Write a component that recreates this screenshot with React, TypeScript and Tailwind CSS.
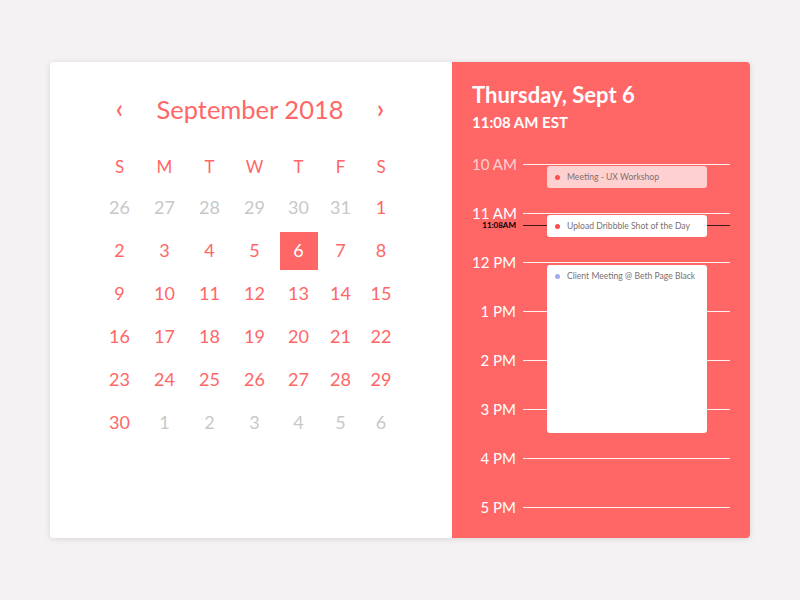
import React from 'react';

const WEEKDAYS = ['S', 'M', 'T', 'W', 'T', 'F', 'S'];

// 6 weeks, grey = outside of September
const DAYS: { d: number; muted?: boolean }[] = [
  ...[26, 27, 28, 29, 30, 31].map(d => ({ d, muted: true })),
  ...Array.from({ length: 30 }, (_, i) => ({ d: i + 1 })),
  ...[1, 2, 3, 4, 5, 6].map(d => ({ d, muted: true })),
];

const HOURS = ['10 AM', '11 AM', '12 PM', '1 PM', '2 PM', '3 PM', '4 PM', '5 PM'];

const EVENTS = [
  { title: 'Meeting - UX Workshop', top: 26, height: 22, bg: 'bg-[#ffd0d0]', dot: 'bg-[#ff4d4d]' },
  { title: 'Upload Dribbble Shot of the Day', top: 75, height: 22, bg: 'bg-white', dot: 'bg-[#ff4d4d]' },
  { title: 'Client Meeting @ Beth Page Black', top: 125, height: 168, bg: 'bg-white', dot: 'bg-[#a4a8f4]' },
];

export default function App() {
  return (
    <div className="w-[800px] h-[600px] bg-[#f4f2f3] pt-[62px] pl-[50px] font-['Lato','Open_Sans',sans-serif]">
      <div className="flex w-[700px] h-[476px] rounded-[4px] overflow-hidden shadow-[0_1px_6px_rgba(0,0,0,0.12)]">
        {/* Calendar */}
        <div className="w-[402px] bg-white pl-[47px] pt-[34px]">
          <div className="flex items-center h-[28px] text-[#ff6666]">
            <div className="w-[45px] text-center text-[26px] leading-none font-semibold -mt-[4px]">‹</div>
            <div className="w-[216px] text-center text-[25.5px] leading-none whitespace-nowrap">September 2018</div>
            <div className="w-[45px] text-center text-[26px] leading-none font-semibold -mt-[4px]">›</div>
          </div>
          <div className="grid grid-cols-[45px_45px_45px_45px_43px_41px_40px] mt-[23px]">
            {WEEKDAYS.map((w, i) => (
              <div key={i} className="h-[39px] flex items-center justify-center text-[17px] text-[#ff6666]">{w}</div>
            ))}
            {DAYS.map((day, i) => {
              const selected = !day.muted && day.d === 6;
              return (
                <div key={i} className="h-[43px] flex items-center justify-center">
                  <div
                    className={`w-[38px] h-[38px] flex items-center justify-center text-[18px] ${
                      selected ? 'bg-[#ff6666] text-white' : day.muted ? 'text-[#c8c8c8]' : 'text-[#ff6666]'
                    }`}
                  >
                    {day.d}
                  </div>
                </div>
              );
            })}
          </div>
        </div>

        {/* Day view */}
        <div className="flex-1 bg-[#ff6666] pl-[20px] pr-[20px] pt-[19px] text-white">
          <div className="text-[22px] font-bold leading-[28px] whitespace-nowrap">Thursday, Sept 6</div>
          <div className="text-[15px] font-bold leading-[20px] mt-[3px]">11:08 AM EST</div>

          <div className="relative mt-[8px]">
            {HOURS.map((h, i) => (
              <div key={h} className="h-[49px] flex items-center">
                <div className={`w-[44px] text-right text-[15px] leading-none whitespace-nowrap ${i === 0 ? 'text-white/70' : 'text-white'}`}>{h}</div>
                <div className="flex-1 ml-[7px] h-px bg-white/90" />
              </div>
            ))}

            {/* now marker */}
            <div className="absolute left-0 top-[81px] w-full flex items-center">
              <div className="w-[44px] text-right text-[8px] font-bold text-black leading-none">11:08AM</div>
              <div className="flex-1 ml-[7px] h-px bg-[#3a1a1a]" />
            </div>

            {EVENTS.map(ev => (
              <div
                key={ev.title}
                className={`absolute left-[75px] w-[160px] rounded-[3px] ${ev.bg}`}
                style={{ top: ev.top, height: ev.height }}
              >
                <div className="flex items-center h-[22px] pl-[8px]">
                  <div className={`w-[5px] h-[5px] rounded-full ${ev.dot}`} />
                  <div className="ml-[7px] text-[8.6px] text-[#7a7070] whitespace-nowrap">{ev.title}</div>
                </div>
              </div>
            ))}
          </div>
        </div>
      </div>
    </div>
  );
}
